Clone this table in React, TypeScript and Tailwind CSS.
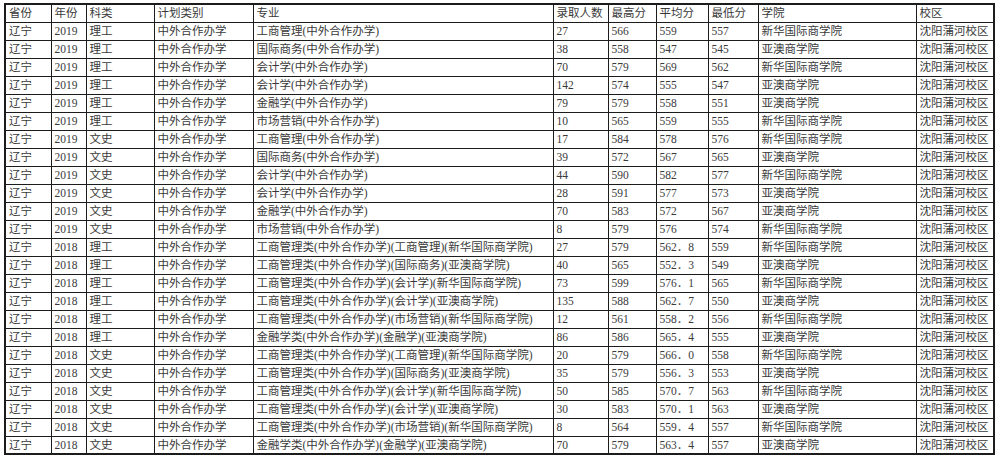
const cols = [
  'w-[46px]',
  'w-[35px]',
  'w-[68px]',
  'w-[99px]',
  'w-[300px]',
  'w-[55px]',
  'w-[48px]',
  'w-[52px]',
  'w-[50px]',
  'w-[158px]',
  'w-[78px]',
]

const head = ['省份', '年份', '科类', '计划类别', '专业', '录取人数', '最高分', '平均分', '最低分', '学院', '校区']

const XH = '新华国际商学院'
const YA = '亚澳商学院'

// [year, 科类, 专业, 人数, 最高, 平均, 最低, 学院]
const rows: string[][] = [
  ['2019', '理工', '工商管理(中外合作办学)', '27', '566', '559', '557', XH],
  ['2019', '理工', '国际商务(中外合作办学)', '38', '558', '547', '545', YA],
  ['2019', '理工', '会计学(中外合作办学)', '70', '579', '569', '562', XH],
  ['2019', '理工', '会计学(中外合作办学)', '142', '574', '555', '547', YA],
  ['2019', '理工', '金融学(中外合作办学)', '79', '579', '558', '551', YA],
  ['2019', '理工', '市场营销(中外合作办学)', '10', '565', '559', '555', XH],
  ['2019', '文史', '工商管理(中外合作办学)', '17', '584', '578', '576', XH],
  ['2019', '文史', '国际商务(中外合作办学)', '39', '572', '567', '565', YA],
  ['2019', '文史', '会计学(中外合作办学)', '44', '590', '582', '577', XH],
  ['2019', '文史', '会计学(中外合作办学)', '28', '591', '577', '573', YA],
  ['2019', '文史', '金融学(中外合作办学)', '70', '583', '572', '567', YA],
  ['2019', '文史', '市场营销(中外合作办学)', '8', '579', '576', '574', XH],
  ['2018', '理工', '工商管理类(中外合作办学)(工商管理)(新华国际商学院)', '27', '579', '562．8', '559', XH],
  ['2018', '理工', '工商管理类(中外合作办学)(国际商务)(亚澳商学院)', '40', '565', '552．3', '549', YA],
  ['2018', '理工', '工商管理类(中外合作办学)(会计学)(新华国际商学院)', '73', '599', '576．1', '565', XH],
  ['2018', '理工', '工商管理类(中外合作办学)(会计学)(亚澳商学院)', '135', '588', '562．7', '550', YA],
  ['2018', '理工', '工商管理类(中外合作办学)(市场营销)(新华国际商学院)', '12', '561', '558．2', '556', XH],
  ['2018', '理工', '金融学类(中外合作办学)(金融学)(亚澳商学院)', '86', '586', '565．4', '555', YA],
  ['2018', '文史', '工商管理类(中外合作办学)(工商管理)(新华国际商学院)', '20', '579', '566．0', '558', XH],
  ['2018', '文史', '工商管理类(中外合作办学)(国际商务)(亚澳商学院)', '35', '579', '556．3', '553', YA],
  ['2018', '文史', '工商管理类(中外合作办学)(会计学)(新华国际商学院)', '50', '585', '570．7', '563', XH],
  ['2018', '文史', '工商管理类(中外合作办学)(会计学)(亚澳商学院)', '30', '583', '570．1', '563', YA],
  ['2018', '文史', '工商管理类(中外合作办学)(市场营销)(新华国际商学院)', '8', '564', '559．4', '557', XH],
  ['2018', '文史', '金融学类(中外合作办学)(金融学)(亚澳商学院)', '70', '579', '563．4', '557', YA],
]

function Cell({ children }: { children: string }) {
  return (
    <td className="h-[18px] overflow-hidden whitespace-nowrap border border-[#1c1c1c] px-[3px] py-0 leading-[16px]">
      {children}
    </td>
  )
}

export default function App() {
  return (
    <div className="h-[459px] w-[1000px] overflow-hidden bg-white pl-[4px] pt-[3px]">
      <table className="table-fixed border-collapse border-2 border-[#1c1c1c] text-left font-['Liberation_Serif','Noto_Sans_CJK_SC',serif] text-[11.5px] text-[#3a3a3a]">
        <colgroup>
          {cols.map((w, i) => (
            <col key={i} className={w} />
          ))}
        </colgroup>
        <tbody>
          <tr>
            {head.map((h) => (
              <Cell key={h}>{h}</Cell>
            ))}
          </tr>
          {rows.map((r, i) => (
            <tr key={i}>
              <Cell>辽宁</Cell>
              <Cell>{r[0]}</Cell>
              <Cell>{r[1]}</Cell>
              <Cell>中外合作办学</Cell>
              <Cell>{r[2]}</Cell>
              <Cell>{r[3]}</Cell>
              <Cell>{r[4]}</Cell>
              <Cell>{r[5]}</Cell>
              <Cell>{r[6]}</Cell>
              <Cell>{r[7]}</Cell>
              <Cell>沈阳蒲河校区</Cell>
            </tr>
          ))}
        </tbody>
      </table>
    </div>
  )
}
